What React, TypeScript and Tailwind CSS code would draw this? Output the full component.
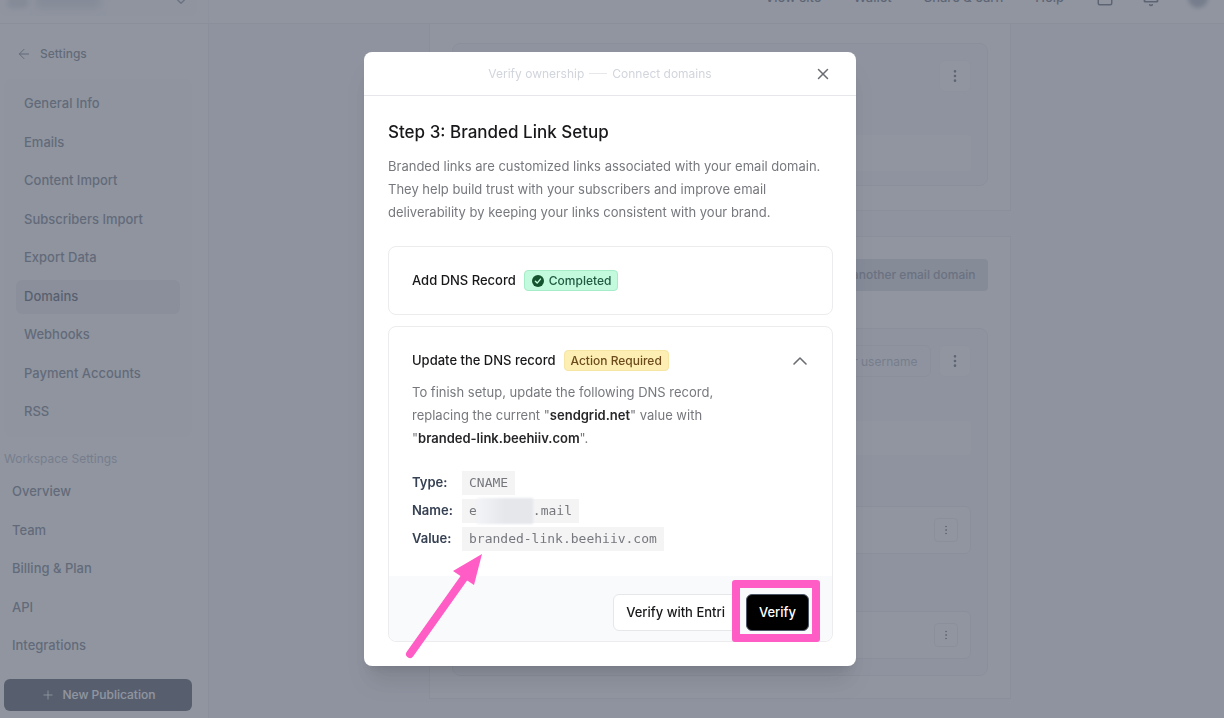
import { useState } from "react";
import {
  ArrowLeft,
  Bell,
  ChevronsUpDown,
  EllipsisVertical,
  Plus,
  Square,
  X,
} from "lucide-react";

const settingsLinks = [
  "General Info",
  "Emails",
  "Content Import",
  "Subscribers Import",
  "Export Data",
  "Domains",
  "Webhooks",
  "Payment Accounts",
  "RSS",
];

const workspaceLinks = ["Overview", "Team", "Billing & Plan", "API", "Integrations"];

const topLinks = ["View site", "Wallet", "Share & earn", "Help"];

const Header = () => (
  <header className="-mt-7 flex h-[52px] shrink-0 border-b border-gray-200 bg-white">
    <div className="flex w-[209px] shrink-0 items-center border-r border-gray-100">
      <button
        aria-label="Switch publication"
        className="flex h-9 w-[197px] items-center gap-2 rounded-md bg-gray-50 px-2"
      >
        <span className="h-5 w-5 rounded bg-gray-300 blur-[2px]" />
        <span className="h-5 w-16 rounded bg-gray-300 blur-[4px]" />
        <ChevronsUpDown size={16} className="ml-auto text-gray-500" />
      </button>
    </div>
    <div className="flex flex-1 items-center justify-end gap-8 pr-4 text-[13px] font-medium text-gray-700">
      {topLinks.map((label) => (
        <a key={label} href="#">
          {label}
        </a>
      ))}
      <div className="flex items-center gap-7">
        <button aria-label="Apps">
          <Square size={18} />
        </button>
        <button aria-label="Notifications">
          <Bell size={18} />
        </button>
        <span className="h-5 w-5 rounded-full bg-gray-400 blur-[2px]" />
      </div>
    </div>
  </header>
);

const Sidebar = () => (
  <aside className="w-[209px] shrink-0 border-r border-gray-200 bg-white pr-4 pl-1 text-[13px] font-medium text-gray-600">
    <a href="#" className="flex h-[55px] items-center gap-2 pt-1 pl-3 text-xs">
      <ArrowLeft size={16} strokeWidth={1.5} />
      Settings
    </a>

    <nav className="flex h-[358px] flex-col justify-between rounded-lg bg-gray-50 p-2 px-3">
      {settingsLinks.map((label) => (
        <a
          key={label}
          href="#"
          className={
            label === "Domains"
              ? "flex h-[34px] items-center rounded-md bg-gray-200 px-2 text-gray-800"
              : "flex h-[34px] items-center rounded-md px-2"
          }
        >
          {label}
        </a>
      ))}
    </nav>

    <h2 className="mt-[14px] text-xs leading-4 font-normal text-gray-400">Workspace Settings</h2>
    <nav className="mt-2 flex h-[188px] flex-col justify-between">
      {workspaceLinks.map((label) => (
        <a key={label} href="#" className="flex h-[34px] items-center px-2">
          {label}
        </a>
      ))}
    </nav>

    <button className="mt-4 flex h-8 w-full items-center justify-center gap-2 rounded-md bg-gray-800 text-xs text-white">
      <Plus size={14} strokeWidth={1.5} />
      New Publication
    </button>
  </aside>
);

const KebabButton = () => (
  <button
    aria-label="More actions"
    className="flex h-8 w-8 shrink-0 items-center justify-center rounded-md border border-gray-100 bg-white text-gray-700"
  >
    <EllipsisVertical size={16} />
  </button>
);

const RecordRow = () => (
  <div className="flex h-12 items-center justify-end rounded-md border border-gray-200 bg-white pr-3">
    <button
      aria-label="Record actions"
      className="flex h-6 w-6 items-center justify-center rounded border border-gray-200 text-gray-600"
    >
      <EllipsisVertical size={12} />
    </button>
  </div>
);

const DomainCards = () => (
  <main className="min-w-0 flex-1 bg-[#f6f7fb] pl-[6px]">
    <div className="mx-auto max-w-[582px]">
      <section className="border-x border-b border-gray-200 bg-white px-[22px] pt-[19px] pb-6">
        <div className="rounded-lg border border-gray-200 bg-[#f6f7fb] p-4 pb-[14px]">
          <div className="flex justify-end">
            <KebabButton />
          </div>
          <input
            aria-label="Web domain"
            readOnly
            className="mt-[43px] block h-9 w-full rounded bg-white px-3 text-[13px]"
          />
        </div>
      </section>

      <section className="mt-[25px] border border-gray-200 bg-white p-[22px]">
        <div className="flex justify-end">
          <button className="flex h-8 items-center gap-2 rounded bg-gray-300 px-3 text-xs font-medium text-gray-500">
            <Plus size={14} />
            Add another email domain
          </button>
        </div>
        <div className="mt-[37px] rounded-lg border border-gray-200 bg-[#f6f7fb] p-4">
          <div className="flex justify-end gap-2">
            <input
              aria-label="Sender username"
              placeholder="Sender username"
              className="h-8 w-[180px] rounded-md border border-gray-200 px-3 text-right text-xs placeholder:text-gray-400"
            />
            <KebabButton />
          </div>
          <input
            aria-label="Email domain"
            readOnly
            className="mt-11 block h-[34px] w-full rounded bg-white px-3 text-[13px]"
          />
          <div className="mt-[51px] flex flex-col gap-[57px]">
            <RecordRow />
            <RecordRow />
          </div>
        </div>
      </section>
    </div>
  </main>
);

const DnsValue = ({ label, children }: { label: string; children: React.ReactNode }) => (
  <div className="flex h-[22px] items-center">
    <dt className="w-[50px] text-[13px] font-semibold text-gray-700">{label}</dt>
    <dd className="flex h-6 items-center bg-[#f4f4f5] px-[7px] font-['DejaVu_Sans_Mono',monospace] text-[13px] text-[#76787d]">
      {children}
    </dd>
  </div>
);

const BrandedLinkModal = () => {
  const [open, setOpen] = useState(true);

  return (
    <div
      role="dialog"
      aria-labelledby="modal-title"
      className="relative w-full max-w-[492px] rounded-lg bg-white shadow-xl"
    >
      <div className="flex h-11 items-center border-b border-gray-200 pr-6 pl-[22px]">
        <div className="flex flex-1 items-center justify-center gap-[5px] text-xs text-gray-300">
          <span>Verify ownership</span>
          <span className="h-px w-[18px] bg-gray-200" />
          <span>Connect domains</span>
        </div>
        <button aria-label="Close" className="text-[#6b6d72]">
          <X size={18} strokeWidth={2} />
        </button>
      </div>

      <div className="pt-6 pr-[23px] pb-6 pl-6">
        <h1 id="modal-title" className="text-[17px] leading-6 font-medium text-[#18181b]">
          Step 3: Branded Link Setup
        </h1>
        <p className="mt-[11px] text-[13px] leading-[23px] text-[#76787d]">
          Branded links are customized links associated with your email domain. They help build
          trust with your subscribers and improve email deliverability by keeping your links
          consistent with your brand.
        </p>

        {/* Completed step */}
        <div className="mt-[22px] flex items-center gap-2 rounded-lg border border-[#ececee] p-[23px]">
          <h2 className="text-[13px] leading-[21px] font-medium text-[#18181b]">Add DNS Record</h2>
          <span className="flex h-[21px] items-center gap-1 rounded border border-[#a7ecc9] bg-[#c3f9dd] px-[6px] text-xs font-medium text-[#1f5a41]">
            <svg width="14" height="14" viewBox="0 0 14 14" fill="none">
              <circle cx="7" cy="7" r="6" fill="#14532d" />
              <path d="M4.4 7.3l1.8 1.8 3.3-4" stroke="#c3f9dd" strokeWidth="1.4" strokeLinecap="round" strokeLinejoin="round" />
            </svg>
            Completed
          </span>
        </div>

        {/* Pending step */}
        <div className="mt-[11px] rounded-lg border border-[#ececee]">
          <div className="px-[23px] pt-[23px] pb-[26px]">
            <div className="flex items-center gap-2">
              <h2 className="text-[13px] leading-[21px] font-medium text-[#18181b]">
                Update the DNS record
              </h2>
              <span className="flex h-[21px] items-center rounded border border-[#f5e6a3] bg-[#fdeeb3] px-[6px] text-xs font-medium text-[#6b4a1c]">
                Action Required
              </span>
              <button
                aria-label="Toggle details"
                aria-expanded={open}
                onClick={() => setOpen(!open)}
                className="ml-auto text-[#6b6d72]"
              >
                <svg width="18" height="18" viewBox="0 0 18 18" fill="none">
                  <path d="M3 12l6-6 6 6" stroke="currentColor" strokeWidth="1.6" strokeLinecap="round" strokeLinejoin="round" />
                </svg>
              </button>
            </div>

            {open && (
              <>
                <p className="mt-[10px] max-w-[320px] text-[13px] leading-[23px] text-[#76787d]">
                  To finish setup, update the following DNS record, replacing the current "
                  <strong className="font-semibold text-[#27272a]">sendgrid.net</strong>" value with
                  "<strong className="font-semibold text-[#27272a]">branded-link.beehiiv.com</strong>
                  ".
                </p>
                <dl className="mt-[22px] flex flex-col gap-[6px]">
                  <DnsValue label="Type:">CNAME</DnsValue>
                  <DnsValue label="Name:">
                    e
                    <span className="h-[26px] w-14 bg-linear-to-r from-gray-100 via-gray-200 to-gray-200 blur-[1px]" />
                    .mail
                  </DnsValue>
                  <DnsValue label="Value:">branded-link.beehiiv.com</DnsValue>
                </dl>
              </>
            )}
          </div>

          <div className="flex justify-end gap-2 rounded-b-lg bg-gray-50 pt-[18px] pr-[23px] pb-[10px] text-[13px] font-medium">
            <button className="h-[37px] rounded-md border border-gray-200 bg-white px-3 text-[#18181b]">
              Verify with Entri
            </button>
            <div className="relative">
              <button className="h-[37px] rounded-md border border-gray-600 bg-black px-3 text-white">
                Verify
              </button>
              <span className="pointer-events-none absolute -top-[14px] -right-[11px] -bottom-[11px] -left-[14px] rounded-[3px] border-8 border-[#ff5cc5]" />
            </div>
          </div>
        </div>
      </div>

      {/* Arrow pointing at the record value */}
      <svg
        className="pointer-events-none absolute bottom-0 left-10"
        width="84"
        height="116"
        viewBox="0 0 84 116"
        fill="#ff5cc5"
      >
        <path d="M6 104L60 28" stroke="#ff5cc5" strokeWidth="8" strokeLinecap="round" />
        <path d="M78 4L49 21L70 35Z" />
      </svg>
    </div>
  );
};

export default function App() {
  return (
    <div className="flex h-screen flex-col overflow-hidden font-['Inter',sans-serif]">
      <Header />
      <div className="flex min-h-0 flex-1">
        <Sidebar />
        <DomainCards />
      </div>
      <div className="fixed inset-0 flex items-center justify-center bg-[#6b7280]/75 pr-1">
        <BrandedLinkModal />
      </div>
    </div>
  );
}
